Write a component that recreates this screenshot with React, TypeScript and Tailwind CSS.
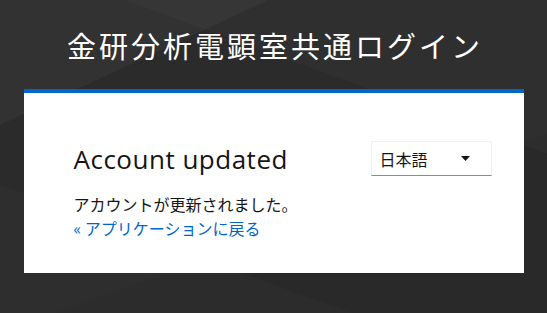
export default function App() {
  return (
    <div
      className="relative w-full h-[313px] overflow-hidden flex flex-col items-center bg-[#2b2b2b] bg-[linear-gradient(155deg,rgba(255,255,255,0.035)_0%,rgba(255,255,255,0.035)_22%,transparent_22%),linear-gradient(200deg,rgba(255,255,255,0.02)_0%,rgba(255,255,255,0.02)_30%,transparent_30%),linear-gradient(20deg,rgba(255,255,255,0.015)_0%,rgba(255,255,255,0.015)_25%,transparent_25%),linear-gradient(340deg,rgba(0,0,0,0.05)_0%,rgba(0,0,0,0.05)_35%,transparent_35%)]"
      style={{ fontFamily: '"Noto Sans CJK JP", "Noto Sans", sans-serif' }}
    >
      <h1 className="pt-[28px] text-[29px] leading-[35px] tracking-[3px] text-white font-normal pl-[3px]">
        金研分析電顕室共通ログイン
      </h1>
      <div className="mt-[26px] w-[500px] bg-white border-t-4 border-[#0066cc] pl-[50px] pr-[32px] pt-[48px] pb-[33px]">
        <div className="flex items-center justify-between">
          <div
            className="text-[26px] leading-[30px] text-[#151515] tracking-[0.5px]"
            style={{ fontFamily: '"Open Sans", sans-serif' }}
          >
            Account updated
          </div>
          <div className="w-[121px] h-[35px] border border-[#f0f0f0] border-b-[#8a8d90] flex items-center justify-between pl-[8px] pr-[21px] text-[16px] text-[#151515]">
            <span>日本語</span>
            <svg width="9" height="5" viewBox="0 0 9 5">
              <path d="M0 0 L9 0 L4.5 5 Z" fill="#151515" />
            </svg>
          </div>
        </div>
        <div className="mt-[16px] text-[16px] leading-[24px] text-[#151515]">
          <p>アカウントが更新されました。</p>
          <p>
            <a href="#" className="text-[#0066cc]">« アプリケーションに戻る</a>
          </p>
        </div>
      </div>
    </div>
  );
}
